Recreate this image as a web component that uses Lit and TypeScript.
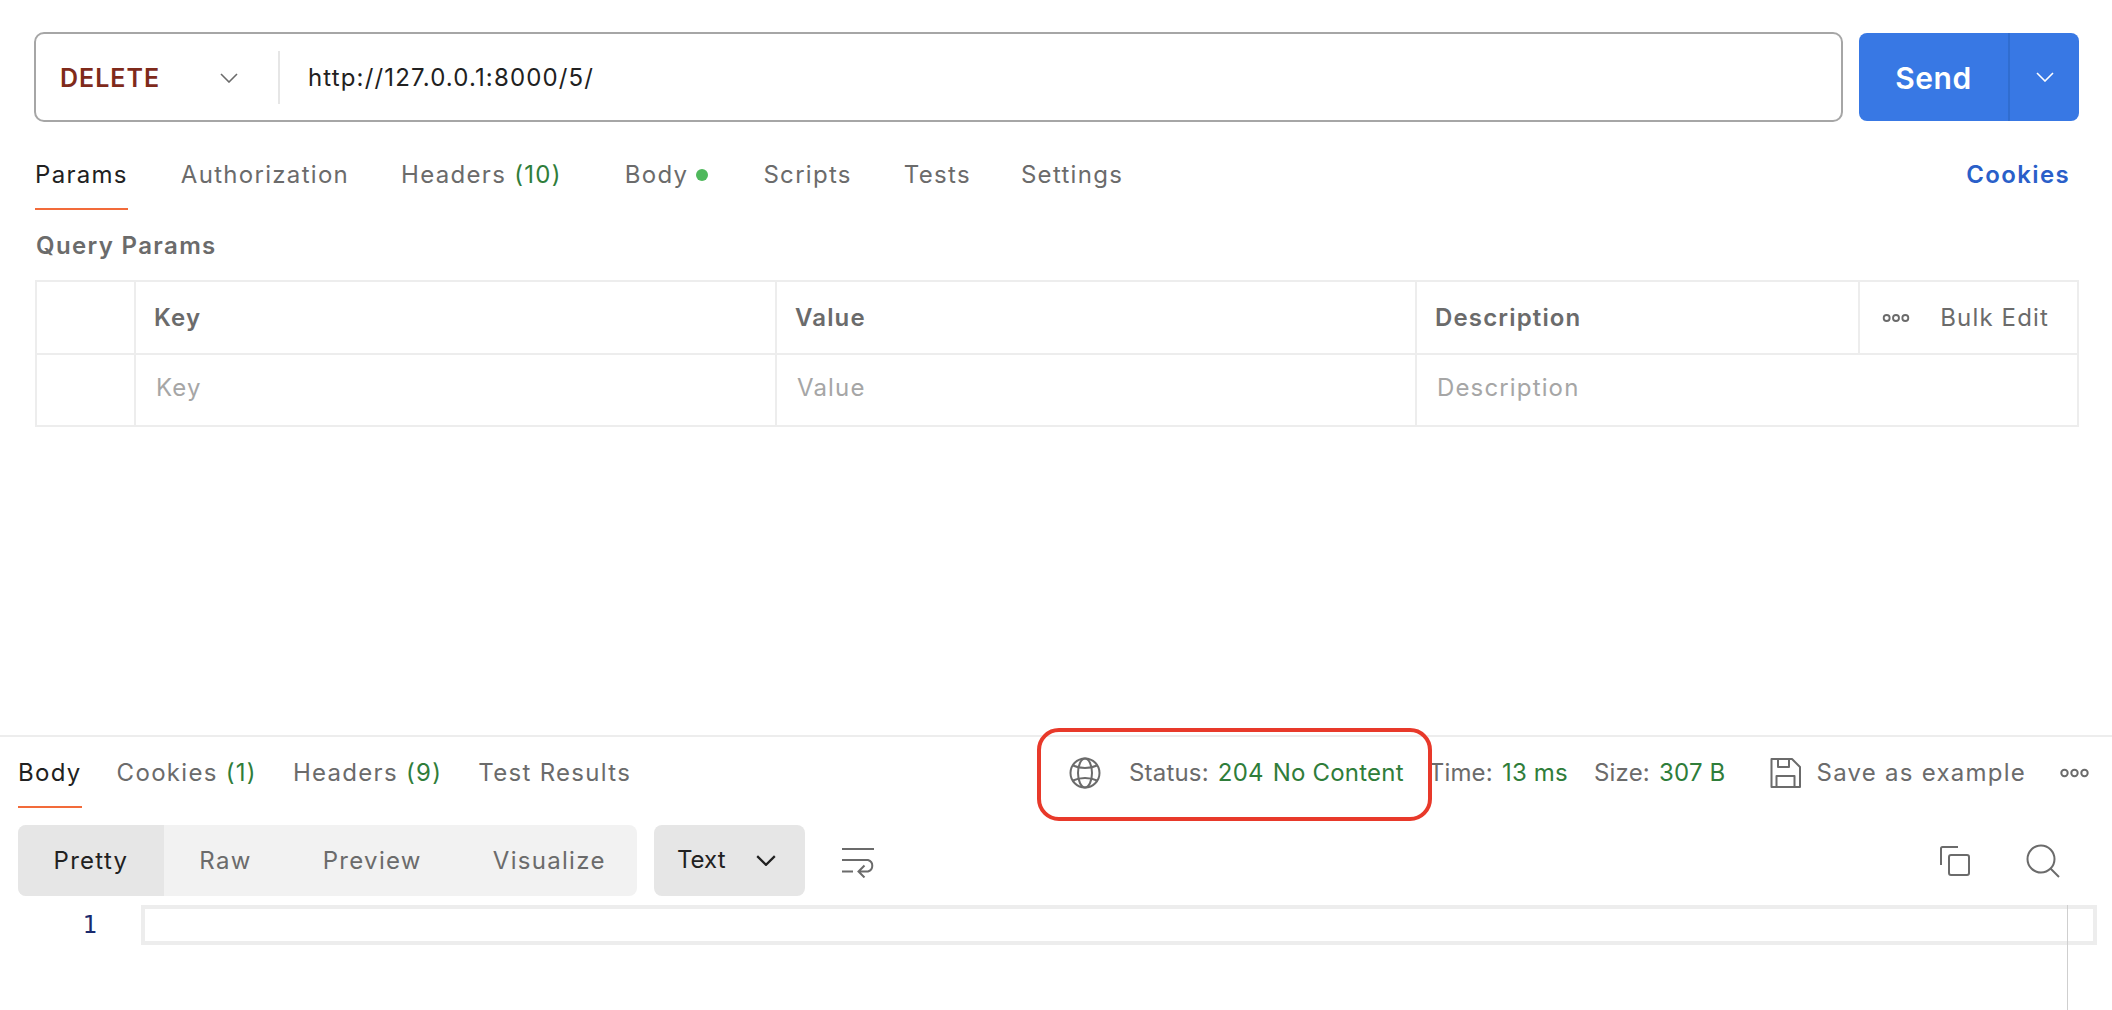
import { LitElement, html, css } from "lit";
import { customElement } from "lit/decorators.js";

const chevron = (cls: string) => html`<svg class=${cls} viewBox="0 0 18 10" fill="none" stroke="currentColor" stroke-width="1.6"><path d="M1 1l8 8 8-8"/></svg>`;
const dots = (cls: string) => html`<svg class=${cls} viewBox="0 0 30 10" fill="none" stroke="currentColor" stroke-width="2"><circle cx="5" cy="5" r="3.2"/><circle cx="15" cy="5" r="3.2"/><circle cx="25" cy="5" r="3.2"/></svg>`;

@customElement("app-root")
export class AppRoot extends LitElement {
  static styles = css`
    :host {
      display: flex;
      flex-direction: column;
      position: relative;
      width: 2112px;
      height: 1010px;
      overflow: hidden;
      background: #fff;
      font-family: Inter, "Liberation Sans", sans-serif;
      font-size: 24px;
      line-height: 32px;
      letter-spacing: 1.15px;
      color: #6b6b6b;
    }
    svg { display: block; flex: none; }
    .top { display: flex; gap: 16px; padding: 32px 33px 0 34px; }
    .bar {
      flex: 1; height: 90px; box-sizing: border-box;
      border: 2px solid #a6a6a6; border-radius: 10px;
      display: flex; align-items: center; padding: 2px 0 0 24px;
      color: #212121;
    }
    .method { width: 160px; color: #7f2a1b; font-weight: 600; font-size: 25px; letter-spacing: 1px; }
    .chev { width: 18px; height: 10px; color: #6b6b6b; margin-right: 40px; }
    .sep { width: 2px; height: 53px; background: #e6e6e6; margin: -2px 28px 0 0; }
    .send {
      width: 220px; height: 88px; margin-top: 1px; border-radius: 8px;
      background: #3878e4; color: #fff; display: flex; align-items: center;
      font-size: 30px; font-weight: 600; letter-spacing: .6px;
    }
    .send-l { width: 149px; text-align: center; padding-top: 2px; }
    .send-r {
      flex: 1; align-self: stretch; border-left: 2px solid #306dd0;
      display: flex; align-items: center; justify-content: center;
    }
    .send-r svg { width: 18px; height: 10px; color: #fff; }

    .tabs { display: flex; letter-spacing: 1.3px; }
    .req-tabs { margin: 37px 42px 0 35px; }
    .tab { padding-bottom: 17px; border-bottom: 2px solid transparent; white-space: nowrap; }
    .tab.active { color: #212121; border-bottom-color: #f26b3a; }
    .green { color: #2f7d3a; }
    .cookies { margin-left: auto; color: #2a5fc9; font-weight: 600; letter-spacing: 1.35px; }
    .dot { display: inline-block; width: 12px; height: 12px; border-radius: 50%; background: #4fb85c; margin-left: 8px; vertical-align: 2px; }

    .qp { margin: 20px 0 18px 36px; font-weight: 600; letter-spacing: 1.35px; }
    .table {
      margin: 0 33px 0 35px; box-sizing: border-box; height: 147px;
      border: 2px solid #ededed;
      display: grid; grid-template-columns: 97px 641px 640px 443px 1fr; grid-template-rows: 73px 1fr;
    }
    .cell { display: flex; align-items: center; padding-left: 18px; border-left: 2px solid #ededed; }
    .cell.first { border-left: 0; }
    .hd { font-weight: 600; border-bottom: 2px solid #ededed; }
    .ph { color: #a6a6a6; padding: 0 0 5px 20px; }
    .span { grid-column: 4 / 6; }
    .bulk { justify-content: space-between; padding: 0 28px 0 22px; font-weight: 400; }
    .bulk svg { width: 28px; height: 10px; }

    .bottom { margin-top: auto; height: 275px; box-sizing: border-box; border-top: 2px solid #ededed; display: flex; flex-direction: column; }
    .res-head { display: flex; justify-content: space-between; padding: 20px 22px 0 18px; }
    .stats { display: flex; align-items: center; height: 32px; white-space: nowrap; letter-spacing: .2px; }
    .globe { width: 32px; height: 32px; margin-right: 28px; }
    .save { width: 31px; height: 32px; margin-right: 16px; }
    .save-label { letter-spacing: 1.25px; margin-right: 33px; }
    .more { width: 31px; height: 10px; }
    .lbl { margin-right: 9px; }
    .val { margin-right: 26px; }
    .val.first { margin-right: 25px; }
    .code { margin-right: 9px; }
    .last { margin-right: 44px; }

    .tools { display: flex; align-items: center; margin: 17px 0 0 18px; height: 71px; }
    .seg { display: flex; height: 71px; width: 619px; background: #f2f2f2; border-radius: 8px; overflow: hidden; align-items: stretch; letter-spacing: 1.3px; }
    .seg span { display: flex; align-items: center; padding: 0 35.5px; }
    .seg .on { background: #e6e6e6; color: #212121; }
    .select {
      margin-left: 17px; width: 151px; height: 71px; box-sizing: border-box; border-radius: 8px;
      background: #e6e6e6; color: #212121; display: flex; align-items: center; justify-content: space-between; padding: 0 29px 0 23px;
      letter-spacing: 0;
    }
    .select span { padding-bottom: 2px; }
    .select svg { width: 20px; height: 11px; color: #212121; stroke-width: 2; }
    .wrap { width: 32px; height: 30px; margin: 4px 0 0 37px; }
    .spacer { flex: 1; }
    .copy { width: 32px; height: 32px; margin-right: 55px; }
    .search { width: 34px; height: 34px; margin-right: 52px; }

    .editor { flex: 1; display: flex; margin-top: 9px; position: relative; }
    .gutter { width: 97px; text-align: right; font-family: "DejaVu Sans Mono", "Liberation Mono", monospace; font-size: 24px; letter-spacing: 0; color: #1a2a6e; line-height: 40px; flex: none; }
    .line { margin: 0 15px 0 44px; flex: 1; height: 40px; box-sizing: border-box; border: 4px solid #ededed; }
    .vline { position: absolute; left: 2067px; top: 0; bottom: 0; width: 1px; background: #cfcfcf; }

    .mark {
      position: absolute; left: 1037px; top: 728px; width: 395px; height: 93px; box-sizing: border-box;
      border: 4px solid #e8392a; border-radius: 22px;
    }
  `;

  render() {
    return html`
      <div class="top">
        <div class="bar">
          <span class="method">DELETE</span>
          ${chevron("chev")}
          <span class="sep"></span>
          <span>http://127.0.0.1:8000/5/</span>
        </div>
        <div class="send">
          <span class="send-l">Send</span>
          <span class="send-r">${chevron("")}</span>
        </div>
      </div>
      <div class="tabs req-tabs">
        <span class="tab active">Params</span>
        <span class="tab" style="margin-left:53px">Authorization</span>
        <span class="tab" style="margin-left:52px">Headers <span class="green">(10)</span></span>
        <span class="tab" style="margin-left:63px">Body<i class="dot"></i></span>
        <span class="tab" style="margin-left:55px">Scripts</span>
        <span class="tab" style="margin-left:52px">Tests</span>
        <span class="tab" style="margin-left:50px">Settings</span>
        <span class="cookies">Cookies</span>
      </div>
      <div class="qp">Query Params</div>
      <div class="table">
        <div class="cell hd first"></div>
        <div class="cell hd">Key</div>
        <div class="cell hd">Value</div>
        <div class="cell hd">Description</div>
        <div class="cell hd bulk">${dots("")}<span>Bulk Edit</span></div>
        <div class="cell first"></div>
        <div class="cell ph">Key</div>
        <div class="cell ph">Value</div>
        <div class="cell ph span">Description</div>
      </div>
      <div class="bottom">
        <div class="res-head">
          <div class="tabs">
            <span class="tab active">Body</span>
            <span class="tab" style="margin-left:35px">Cookies <span class="green">(1)</span></span>
            <span class="tab" style="margin-left:36px">Headers <span class="green">(9)</span></span>
            <span class="tab" style="margin-left:36px">Test Results</span>
          </div>
          <div class="stats">
            <svg class="globe" viewBox="0 0 32 32" fill="none" stroke="currentColor" stroke-width="2"><circle cx="16" cy="16" r="14.5"/><ellipse cx="16" cy="16" rx="7" ry="14.5"/><path d="M4 8.500c7 3.400 17 3.400 24 0M4 23.500c7-3.400 17-3.400 24 0"/></svg>
            <span class="lbl">Status:</span>
            <span class="green code">204</span>
            <span class="green val first">No Content</span>
            <span class="lbl">Time:</span>
            <span class="green val">13 ms</span>
            <span class="lbl">Size:</span>
            <span class="green last">307 B</span>
            <svg class="save" viewBox="0 0 31 32" fill="none" stroke="currentColor" stroke-width="2" stroke-linejoin="round"><path d="M1.500 2h20.500l8 8v20H1.500z"/><path d="M8 2v8h11V2M6.500 30V19h18v11"/></svg>
            <span class="save-label">Save as example</span>
            ${dots("more")}
          </div>
        </div>
        <div class="tools">
          <div class="seg"><span class="on">Pretty</span><span>Raw</span><span>Preview</span><span>Visualize</span></div>
          <div class="select"><span>Text</span>${chevron("")}</div>
          <svg class="wrap" viewBox="0 0 32 30" fill="none" stroke="currentColor" stroke-width="2"><path d="M0 1h32M0 12h26a6 6 0 0 1 0 11.500H17M22.500 17.500l-6 6 6 6M0 23.500h11"/></svg>
          <span class="spacer"></span>
          <svg class="copy" viewBox="0 0 32 32" fill="none" stroke="currentColor" stroke-width="2"><path d="M19 2H3.500A1.500 1.500 0 0 0 2 3.500V20"/><rect x="10" y="10" width="20" height="20" rx="2"/></svg>
          <svg class="search" viewBox="0 0 34 34" fill="none" stroke="currentColor" stroke-width="2"><circle cx="15" cy="15" r="13.500"/><path d="M24.500 24.500L33 33"/></svg>
        </div>
        <div class="editor">
          <div class="gutter">1</div>
          <div class="line"></div>
          <div class="vline"></div>
        </div>
      </div>
      <div class="mark"></div>
    `;
  }
}
